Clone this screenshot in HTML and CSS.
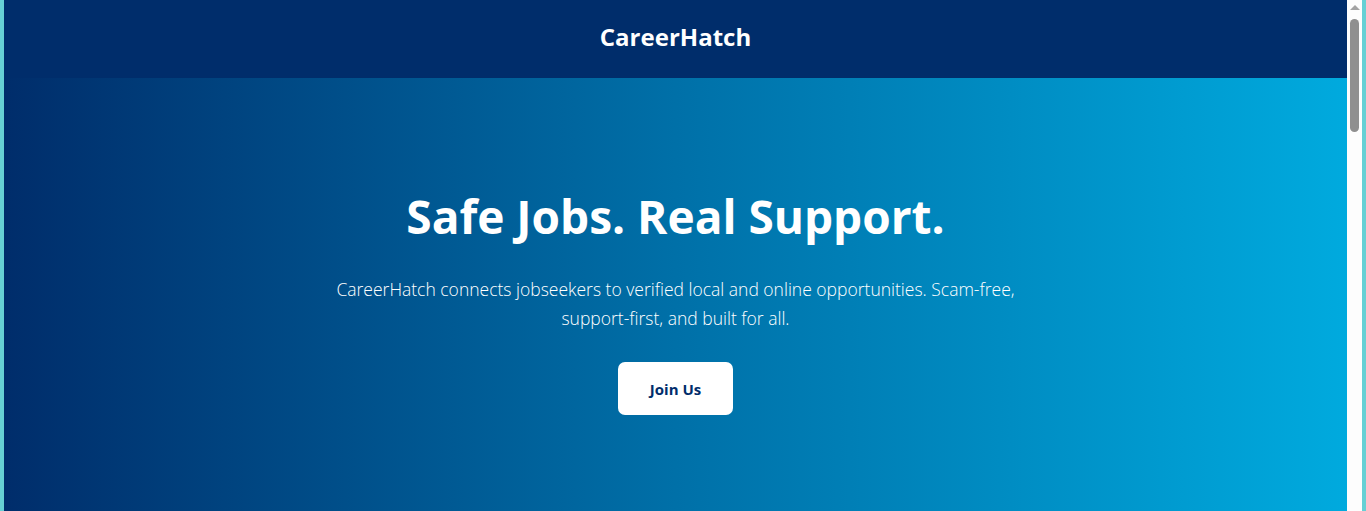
FILE: index.html
```html
<!DOCTYPE html>
<html lang="en">
<head>
<meta charset="utf-8">
<title>CareerHatch</title>
<link rel="stylesheet" href="styles.css">
</head>
<body>
<div class="frame">
  <div class="page">
    <header class="topbar">
      <h1 class="brand">CareerHatch</h1>
    </header>
    <section class="hero">
      <h2 class="hero-title">Safe Jobs. Real Support.</h2>
      <p class="hero-text">CareerHatch connects jobseekers to verified local and online opportunities. Scam-free, support-first, and built for all.</p>
      <a class="btn" href="#">Join Us</a>
    </section>
  </div>
  <div class="scrollbar" aria-hidden="true">
    <span class="scroll-arrow"></span>
    <span class="scroll-thumb"></span>
  </div>
</div>
</body>
</html>
```

FILE: styles.css
```css
* { box-sizing: border-box; }
html, body {
  margin: 0;
  padding: 0;
  height: 100%;
  overflow: hidden;
}
body {
  font-family: "Open Sans", "Noto Sans", "Liberation Sans", sans-serif;
  color: #ffffff;
}
.frame {
  display: flex;
  height: 100vh;
  border-left: 4px solid #66d0d4;
  border-right: 4px solid #66d0d4;
}
.page {
  flex: 1;
  display: flex;
  flex-direction: column;
  min-width: 0;
}
.topbar {
  height: 78px;
  padding-bottom: 6px;
  background: #002d6b;
  display: flex;
  align-items: center;
  justify-content: center;
}
.brand {
  margin: 0;
  font-size: 24px;
  font-weight: 700;
  letter-spacing: 0;
}
.hero {
  flex: 1;
  background: linear-gradient(to right, #002d6b 0%, #0070a8 50%, #00aade 100%);
  display: flex;
  flex-direction: column;
  align-items: center;
  padding-top: 111px;
  text-align: center;
}
.hero-title {
  margin: 0 0 31px;
  font-size: 46px;
  font-weight: 700;
  line-height: 1.2;
}
.hero-text {
  margin: 0 0 29px;
  max-width: 700px;
  font-size: 17.5px;
  font-weight: 300;
  line-height: 29px;
}
.btn {
  display: inline-flex;
  align-items: center;
  justify-content: center;
  width: 115px;
  height: 53px;
  background: #ffffff;
  color: #002d6b;
  border-radius: 7px;
  font-size: 15px;
  font-weight: 700;
  text-decoration: none;
}
.scrollbar {
  width: 15px;
  background: #fdfdfd;
  display: flex;
  flex-direction: column;
  align-items: center;
  padding-top: 5px;
}
.scroll-arrow {
  width: 0;
  height: 0;
  border-left: 5px solid transparent;
  border-right: 5px solid transparent;
  border-bottom: 5px solid #a3a3a3;
}
.scroll-thumb {
  margin-top: 9px;
  width: 9px;
  height: 113px;
  background: #8f8f8f;
  border-radius: 5px;
}
```
